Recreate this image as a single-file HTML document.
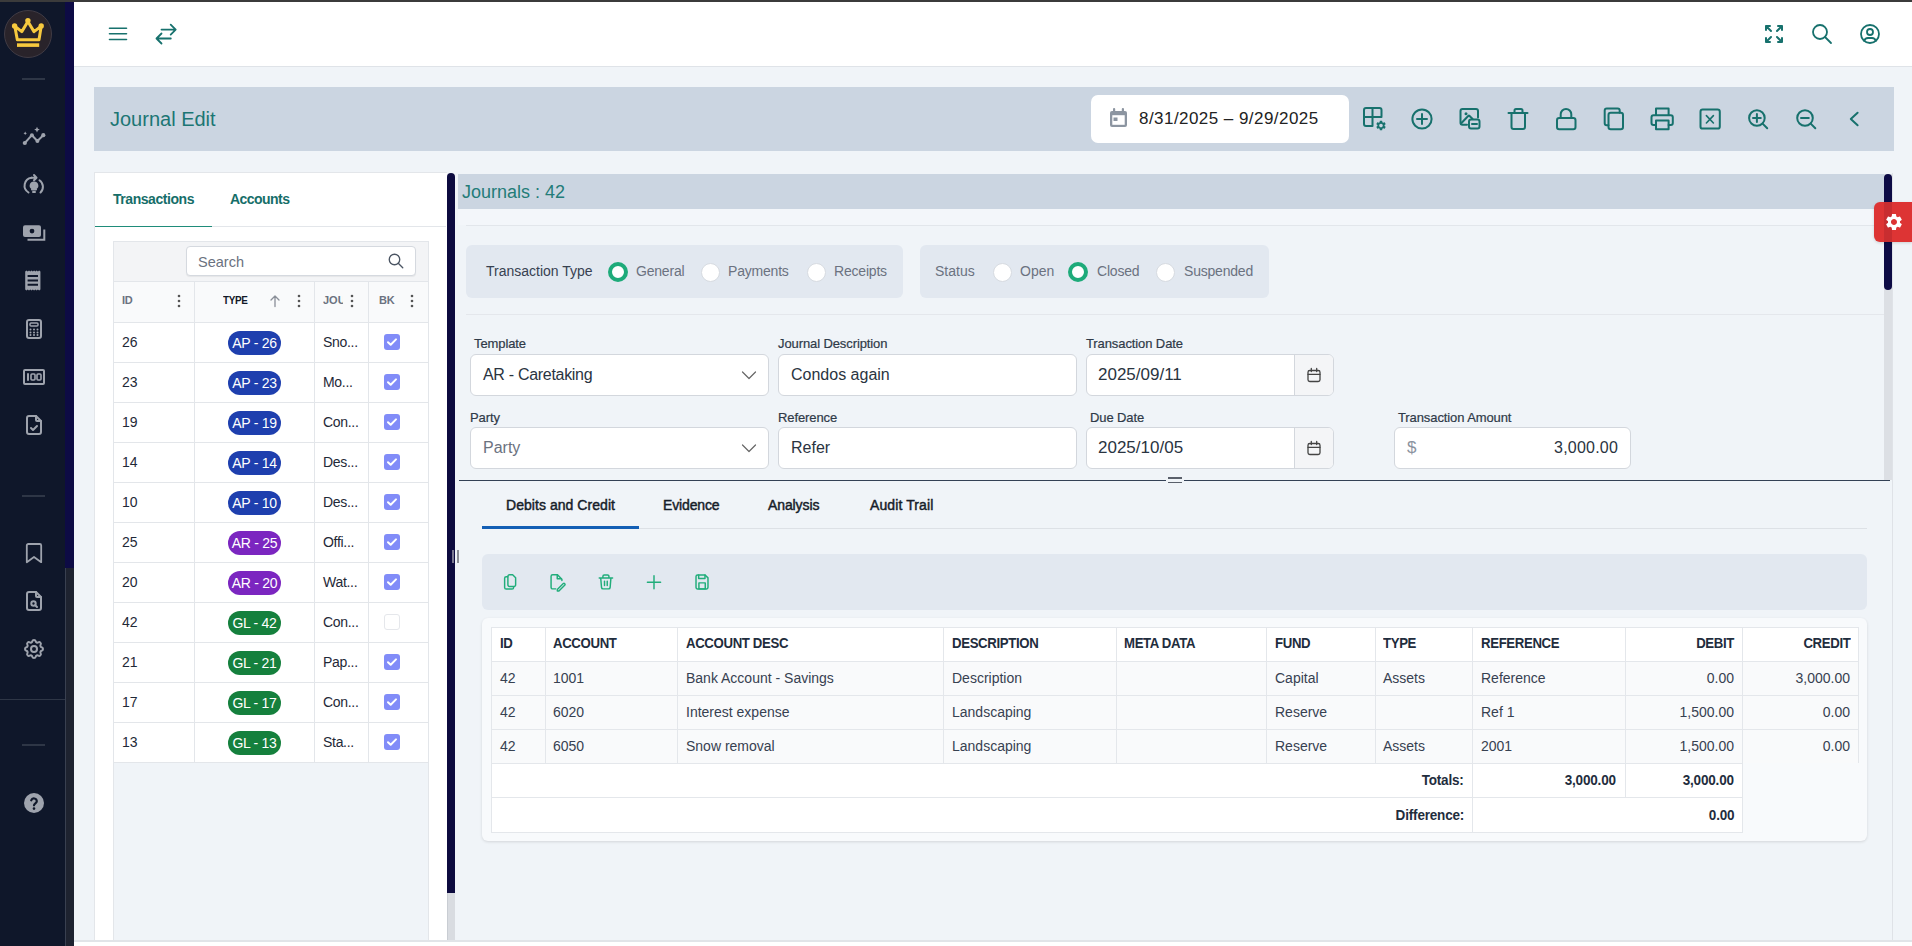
<!DOCTYPE html>
<html><head><meta charset="utf-8">
<style>
*{box-sizing:border-box;margin:0;padding:0}
html,body{width:1912px;height:946px;overflow:hidden}
body{font-family:"Liberation Sans",sans-serif;background:#f0f4f8;position:relative;color:#1f2937}
.a{position:absolute}
svg{display:block;overflow:visible}
.md{-webkit-text-stroke:0.45px currentColor}
</style></head><body>
<div class="a" style="left:0px;top:0px;width:1912px;height:2px;background:#3b3b3b"></div><div class="a" style="left:0px;top:2px;width:65px;height:944px;background:#0f172a"></div><div class="a" style="left:65px;top:2px;width:9px;height:944px;background:#1e2330;border-left:1px solid #394050"></div><div class="a" style="left:65px;top:2px;width:9px;height:566px;background:#0d0b45"></div><div class="a" style="left:4px;top:10px;width:48px;height:48px;border-radius:50%;background:#29232a;border:1px solid #403b44"></div><svg class="a" style="left:11px;top:18px" width="34" height="32" viewBox="0 0 34 32"><g fill="none" stroke="#f7c93e" stroke-width="3" stroke-linejoin="round"><path d="M3.8 8.2 L10.8 13.6 L16.9 3.5 L23 13.6 L30.2 8.2 L28 21.8 H6.3 Z"/></g><g fill="#f7c93e"><circle cx="16.9" cy="2.6" r="2.7"/><circle cx="3.6" cy="8" r="2.7"/><circle cx="30.2" cy="8" r="2.7"/><rect x="6" y="25.3" width="22.2" height="3.6"/></g></svg><div class="a" style="left:22px;top:78px;width:23px;height:2px;background:#2e3646"></div><svg class="a" style="left:22px;top:125px" width="24" height="24" viewBox="0 0 24 24" fill="none" stroke="#9ea3ad" stroke-width="2" stroke-linecap="round" stroke-linejoin="round" ><path d="M2.8 18L9.9 10.2L15.4 16L21.3 10.2" stroke-width="2"/><circle cx="2.8" cy="18" r="2.1" fill="#9ea3ad" stroke="none"/><circle cx="9.9" cy="10.2" r="2" fill="#9ea3ad" stroke="none"/><circle cx="15.4" cy="16" r="2" fill="#9ea3ad" stroke="none"/><circle cx="21.3" cy="10.2" r="2.1" fill="#9ea3ad" stroke="none"/><path d="M15 1.8l.9 1.9 1.9.9-1.9.9-.9 1.9-.9-1.9-1.9-.9 1.9-.9z" fill="#9ea3ad" stroke="none"/><path d="M3.2 6.6l.6 1.1 1.1.6-1.1.6-.6 1.1-.6-1.1-1.1-.6 1.1-.6z" fill="#9ea3ad" stroke="none"/></svg><svg class="a" style="left:22px;top:173px" width="24" height="24" viewBox="0 0 24 24" fill="none" stroke="#9ea3ad" stroke-width="2" stroke-linecap="round" stroke-linejoin="round" ><path d="M6.5 19.5a8 8 0 0 1 3-14.8"/><path d="M9.5 4.7h4.5M12 2l2.5 2.7L12 7.3"/><path d="M17.5 7.2a8 8 0 0 1 1 12.3"/><path d="M12 9.5a3.2 3.2 0 0 1 2 5.8v1.2h-4v-1.2a3.2 3.2 0 0 1 2-5.8z" fill="#9ea3ad"/><path d="M11 19h2"/></svg><svg class="a" style="left:22px;top:220px" width="24" height="24" viewBox="0 0 24 24" fill="none" stroke="#9ea3ad" stroke-width="2" stroke-linecap="round" stroke-linejoin="round" ><rect x="1" y="5.2" width="18" height="11.8" rx="2" fill="#9ea3ad" stroke="none"/><circle cx="10" cy="11.1" r="2.4" fill="#0f172a" stroke="none"/><path d="M22.3 9.5V19.8H5.5" stroke-linecap="butt" stroke-linejoin="miter"/></svg><svg class="a" style="left:22px;top:269px" width="24" height="24" viewBox="0 0 24 24" fill="none" stroke="#9ea3ad" stroke-width="2" stroke-linecap="round" stroke-linejoin="round" ><path d="M3.2 2.5l1.27-1 1.27 1 1.27-1 1.27 1 1.27-1 1.27 1 1.27-1 1.27 1 1.27-1 1.27 1 1.27-1 1.26 1V20.4l-1.26 1-1.27-1-1.27 1-1.27-1-1.27 1-1.27-1-1.27 1-1.27-1-1.27 1-1.27-1-1.27 1-1.27-1z" fill="#9ea3ad" stroke="none"/><path d="M5.6 7h10.4M5.6 11.4h10.4M5.6 15.8h10.4" stroke="#0f172a" stroke-width="2" stroke-linecap="butt"/></svg><svg class="a" style="left:22px;top:317px" width="24" height="24" viewBox="0 0 24 24" fill="none" stroke="#9ea3ad" stroke-width="2" stroke-linecap="round" stroke-linejoin="round" ><rect x="5" y="3" width="14" height="18" rx="2"/><rect x="8" y="6" width="8" height="3" rx="1" stroke-width="1.5"/><path d="M8.5 12.5h.01M12 12.5h.01M15.5 12.5h.01M8.5 15.5h.01M12 15.5h.01M15.5 15.5h.01M8.5 18h.01M12 18h.01M15.5 18h.01"/></svg><svg class="a" style="left:22px;top:365px" width="24" height="24" viewBox="0 0 24 24" fill="none" stroke="#9ea3ad" stroke-width="2" stroke-linecap="round" stroke-linejoin="round" ><rect x="2" y="5" width="20" height="14" rx="1"/><path d="M6 9v6"/><rect x="9" y="9" width="4" height="6" rx="1" stroke-width="1.6"/><rect x="15" y="9" width="4" height="6" rx="1" stroke-width="1.6"/></svg><svg class="a" style="left:22px;top:413px" width="24" height="24" viewBox="0 0 24 24" fill="none" stroke="#9ea3ad" stroke-width="2" stroke-linecap="round" stroke-linejoin="round" ><path d="M14 3v4a1 1 0 0 0 1 1h4"/><path d="M17 21H7a2 2 0 0 1-2-2V5a2 2 0 0 1 2-2h7l5 5v11a2 2 0 0 1-2 2z"/><path d="M9 15l2 2 4-4"/></svg><div class="a" style="left:22px;top:495px;width:23px;height:2px;background:#2e3646"></div><svg class="a" style="left:22px;top:541px" width="24" height="24" viewBox="0 0 24 24" fill="none" stroke="#9ea3ad" stroke-width="2" stroke-linecap="round" stroke-linejoin="round" ><path d="M4.8 4.5a1.5 1.5 0 0 1 1.5-1.5h11.4a1.5 1.5 0 0 1 1.5 1.5V21.2l-7.2-5.2-7.2 5.2z" stroke-width="1.8"/></svg><svg class="a" style="left:22px;top:589px" width="24" height="24" viewBox="0 0 24 24" fill="none" stroke="#9ea3ad" stroke-width="2" stroke-linecap="round" stroke-linejoin="round" ><path d="M14 3v4a1 1 0 0 0 1 1h4"/><path d="M12 21H7a2 2 0 0 1-2-2V5a2 2 0 0 1 2-2h7l5 5v11a2 2 0 0 1-2 2h-5z"/><circle cx="11.5" cy="14.5" r="2.2"/><path d="M13.2 16.2L15 18"/></svg><svg class="a" style="left:22px;top:637px" width="24" height="24" viewBox="0 0 24 24" fill="none" stroke="#9ea3ad" stroke-width="2" stroke-linecap="round" stroke-linejoin="round" ><path d="M10.325 4.317c.426-1.756 2.924-1.756 3.35 0a1.724 1.724 0 0 0 2.573 1.066c1.543-.94 3.31.826 2.37 2.370a1.724 1.724 0 0 0 1.065 2.572c1.756.426 1.756 2.924 0 3.35a1.724 1.724 0 0 0-1.066 2.573c.94 1.543-.826 3.31-2.37 2.37a1.724 1.724 0 0 0-2.572 1.065c-.426 1.756-2.924 1.756-3.35 0a1.724 1.724 0 0 0-2.573-1.066c-1.543.94-3.31-.826-2.37-2.37a1.724 1.724 0 0 0-1.065-2.572c-1.756-.426-1.756-2.924 0-3.35a1.724 1.724 0 0 0 1.066-2.573c-.94-1.543.826-3.31 2.37-2.37 1 .608 2.296.07 2.572-1.065z"/><circle cx="12" cy="12" r="3"/></svg><div class="a" style="left:0px;top:699px;width:65px;height:1px;background:#2e3646"></div><div class="a" style="left:22px;top:744px;width:23px;height:2px;background:#2e3646"></div><svg class="a" style="left:22px;top:791px" width="24" height="24" viewBox="0 0 24 24"><circle cx="12" cy="12" r="10" fill="#9ea3ad"/><path d="M9.2 9.3a2.9 2.9 0 0 1 5.6 1c0 1.9-2.8 2.2-2.8 4" fill="none" stroke="#0f172a" stroke-width="2.2" stroke-linecap="round"/><circle cx="12" cy="17.6" r="1.3" fill="#0f172a"/></svg><div class="a" style="left:74px;top:2px;width:1838px;height:65px;background:#fff;border-bottom:1px solid #dfe3e8"></div><svg class="a" style="left:106px;top:22px" width="24" height="24" viewBox="0 0 24 24" fill="none" stroke="#17716d" stroke-width="1.6" stroke-linecap="round" stroke-linejoin="round"><path d="M3.5 6.2h17M3.5 11.8h17M3.5 17.5h17"/></svg><svg class="a" style="left:150px;top:20px" width="32" height="28" viewBox="150 20 32 28" fill="none" stroke="#17716d" stroke-width="1.8" stroke-linecap="round" stroke-linejoin="round"><path d="M161.5 29.6H175.7M170.7 24.6l5 5-5 5M170.8 38.5H156.5M161.5 33.5l-5 5 5 5"/></svg><svg class="a" style="left:1762px;top:22px" width="24" height="24" viewBox="0 0 24 24" fill="none" stroke="#17716d" stroke-width="2" stroke-linecap="round" stroke-linejoin="round"><path d="M16 4h4v4M15 9l5-5M8 20H4v-4M4 20l5-5M16 20h4v-4M15 15l5 5M8 4H4v4M4 4l5 5"/></svg><svg class="a" style="left:1810px;top:22px" width="24" height="24" viewBox="0 0 24 24" fill="none" stroke="#17716d" stroke-width="1.8" stroke-linecap="round" stroke-linejoin="round"><circle cx="10" cy="10" r="7"/><path d="M21 21l-6-6"/></svg><svg class="a" style="left:1858px;top:22px" width="24" height="24" viewBox="0 0 24 24" fill="none" stroke="#17716d" stroke-width="1.8" stroke-linecap="round" stroke-linejoin="round"><circle cx="12" cy="12" r="9"/><circle cx="12" cy="10" r="3"/><path d="M6.2 18.9a4 4 0 0 1 3.8-2.9h4a4 4 0 0 1 3.8 2.9"/></svg><div class="a" style="left:94px;top:87px;width:1800px;height:64px;background:#cbd5e1"></div><div class="a " style="left:110px;top:107px;font-size:20px;line-height:24px;color:#1c7674;font-weight:normal;letter-spacing:0px;white-space:nowrap;">Journal Edit</div><div class="a" style="left:1091px;top:95px;width:258px;height:48px;background:#fff;border-radius:7px"></div><svg class="a" style="left:1108px;top:107px" width="22" height="22" viewBox="0 0 22 22"><rect x="2" y="4" width="17" height="16" rx="2" fill="#8c95a1"/><rect x="4.3" y="8.2" width="12.4" height="9.6" fill="#fff"/><rect x="5.5" y="10.5" width="4" height="3.5" fill="#8c95a1"/><rect x="5" y="1" width="2.2" height="4" rx="1" fill="#8c95a1"/><rect x="13.8" y="1" width="2.2" height="4" rx="1" fill="#8c95a1"/></svg><div class="a " style="left:1139px;top:109px;font-size:17px;line-height:20px;color:#222;font-weight:normal;letter-spacing:0.45px;white-space:nowrap;">8/31/2025 – 9/29/2025</div><svg class="a" style="left:1350px;top:100px" width="530" height="40" viewBox="1350 100 530 40" fill="none" stroke="#17716d" stroke-width="2" stroke-linecap="round" stroke-linejoin="round"><path d="M1372.5 126H1366a2 2 0 0 1-2-2V110a2 2 0 0 1 2-2h13.5a2 2 0 0 1 2 2v6.5M1364 117H1381.5M1372.5 108V126"/><circle cx="1381" cy="125.5" r="6.5" fill="#cbd5e1" stroke="none"/><path transform="translate(1375,119.5) scale(0.5)" fill="#17716d" stroke="none" d="M19.14 12.94c.04-.3.06-.61.06-.94 0-.32-.02-.64-.07-.94l2.03-1.58a.49.49 0 0 0 .12-.61l-1.92-3.32a.488.488 0 0 0-.59-.22l-2.39.96c-.5-.38-1.03-.7-1.62-.94l-.36-2.54a.484.484 0 0 0-.48-.41h-3.84c-.24 0-.43.17-.47.41l-.36 2.54c-.59.24-1.130.57-1.62.94l-2.39-.96c-.22-.08-.47 0-.59.22L2.74 8.87c-.12.21-.08.47.12.61l2.03 1.58c-.05.3-.09.63-.09.94s.02.64.07.94l-2.03 1.58a.49.49 0 0 0-.12.61l1.92 3.32c.12.22.37.29.59.22l2.39-.96c.5.38 1.03.7 1.62.94l.36 2.54c.05.24.24.41.48.41h3.84c.24 0 .44-.17.47-.41l.36-2.54c.59-.24 1.13-.56 1.62-.94l2.39.96c.22.08.47 0 .59-.22l1.92-3.32c.12-.22.07-.47-.12-.61l-2.01-1.58zM12 15.6c-1.98 0-3.6-1.62-3.6-3.6s1.62-3.6 3.6-3.6 3.6 1.62 3.6 3.6-1.62 3.6-3.6 3.6z"/><circle cx="1422" cy="119" r="9.6"/><path d="M1417 119h10M1422 114v10"/><path d="M1467 124.7h-4.5a2 2 0 0 1-2-2V111a2 2 0 0 1 2-2h13.5a2 2 0 0 1 2 2v6.5"/><circle cx="1466" cy="113.8" r="1.5" fill="#17716d" stroke="none"/><path d="M1461 123.5l7.2-7.5a1 1 0 0 1 1.4 0l3 3"/><rect x="1469" y="119.5" width="10.5" height="9" rx="2"/><path d="M1472 124h5"/><path d="M1508.5 113H1527.5M1511.5 113v14a2 2 0 0 0 2 2H1523a2 2 0 0 0 2-2v-14M1514.5 113v-2.5a1.5 1.5 0 0 1 1.5-1.5h5a1.5 1.5 0 0 1 1.5 1.5V113"/><rect x="1557" y="118" width="18.5" height="11.2" rx="2.2"/><path d="M1560.7 118v-3.8a5.3 5.3 0 0 1 10.6 0V118"/><path d="M1608.5 125.2h-1.8a2 2 0 0 1-2-2V110.5a2 2 0 0 1 2-2h11a2 2 0 0 1 2 2v2.2"/><rect x="1608.5" y="112.8" width="14.5" height="16.5" rx="2.2"/><path d="M1656 115.3V108.6H1668.6V115.3M1656 125h-2.5a2 2 0 0 1-2-2v-5.7a2 2 0 0 1 2-2h17.3a2 2 0 0 1 2 2v5.7a2 2 0 0 1-2 2h-2.2"/><rect x="1656" y="120.6" width="12.6" height="8.6"/><rect x="1700.5" y="109.6" width="19.3" height="19" rx="2.2"/><path d="M1706.4 115.6l7 7.4M1713.4 115.6l-7 7.4" stroke-width="1.6"/><circle cx="1756.9" cy="118" r="7.8"/><path d="M1762.6 123.6l4.6 4.6M1753 118h7.8M1756.9 114.1v7.8"/><circle cx="1805" cy="118" r="7.8"/><path d="M1810.7 123.6l4.6 4.6M1801 118h7.8"/><path d="M1857.6 112.7l-6.8 6.2 6.8 6.3"/></svg><div class="a" style="left:94px;top:172px;width:353px;height:769px;background:#fff;border:1px solid #e3e6ea;border-right:none;border-bottom:none"></div><div class="a " style="left:113px;top:191px;font-size:14px;line-height:16px;color:#166e69;font-weight:bold;letter-spacing:-0.45px;white-space:nowrap;">Transactions</div><div class="a " style="left:230px;top:191px;font-size:14px;line-height:16px;color:#166e69;font-weight:bold;letter-spacing:-0.55px;white-space:nowrap;">Accounts</div><div class="a" style="left:95px;top:226px;width:351px;height:1px;background:#e3e6ea"></div><div class="a" style="left:95px;top:225.5px;width:117px;height:1.6px;background:#1f8c7a"></div><div class="a" style="left:113px;top:241px;width:316px;height:700px;background:#f0f4f8;border-left:1px solid #e3e6ea;border-right:1px solid #e3e6ea"></div><div class="a" style="left:113px;top:241px;width:316px;height:40px;background:#f3f4f6;border:1px solid #e3e6ea;border-bottom:none"></div><div class="a" style="left:186px;top:246px;width:230px;height:30px;background:#fff;border:1px solid #d5d9df;border-radius:4px;box-shadow:0 1px 1px rgba(0,0,0,.06)"></div><div class="a " style="left:198px;top:254px;font-size:14.5px;line-height:17px;color:#6b7280;font-weight:normal;letter-spacing:0px;white-space:nowrap;">Search</div><svg class="a" style="left:387px;top:252px" width="18" height="18" viewBox="0 0 24 24" fill="none" stroke="#4b5563" stroke-width="1.8" stroke-linecap="round" stroke-linejoin="round"><circle cx="10" cy="10" r="7"/><path d="M21 21l-6-6"/></svg><div class="a" style="left:113px;top:281px;width:316px;height:42px;background:#f9fafb;border-top:1px solid #e3e6ea;border-bottom:1px solid #e3e6ea"></div><div class="a" style="left:194px;top:281px;width:1px;height:482px;background:#e3e6ea"></div><div class="a" style="left:314px;top:281px;width:1px;height:482px;background:#e3e6ea"></div><div class="a" style="left:368px;top:281px;width:1px;height:482px;background:#e3e6ea"></div><div class="a" style="left:113px;top:281px;width:1px;height:482px;background:#e3e6ea"></div><div class="a" style="left:428px;top:281px;width:1px;height:482px;background:#e3e6ea"></div><div class="a " style="left:122px;top:294px;font-size:11px;line-height:13px;color:#6b7280;font-weight:bold;letter-spacing:-0.2px;white-space:nowrap;">ID</div><div class="a " style="left:223px;top:294px;font-size:11px;line-height:13px;color:#111827;font-weight:bold;letter-spacing:-0.4px;white-space:nowrap;transform:scaleX(0.9);transform-origin:0 0">TYPE</div><div class="a" style="left:323px;top:294px;width:20px;overflow:hidden;font-size:11px;line-height:13px;color:#6b7280;font-weight:bold;white-space:nowrap">JOURNAL</div><div class="a " style="left:379px;top:294px;font-size:11px;line-height:13px;color:#6b7280;font-weight:bold;letter-spacing:-0.2px;white-space:nowrap;">BK</div><svg class="a" style="left:177px;top:294px" width="4" height="14" viewBox="0 0 4 14"><circle cx="2" cy="2" r="1.3" fill="#555"/><circle cx="2" cy="7" r="1.3" fill="#555"/><circle cx="2" cy="12" r="1.3" fill="#555"/></svg><svg class="a" style="left:297px;top:294px" width="4" height="14" viewBox="0 0 4 14"><circle cx="2" cy="2" r="1.3" fill="#555"/><circle cx="2" cy="7" r="1.3" fill="#555"/><circle cx="2" cy="12" r="1.3" fill="#555"/></svg><svg class="a" style="left:350px;top:294px" width="4" height="14" viewBox="0 0 4 14"><circle cx="2" cy="2" r="1.3" fill="#555"/><circle cx="2" cy="7" r="1.3" fill="#555"/><circle cx="2" cy="12" r="1.3" fill="#555"/></svg><svg class="a" style="left:410px;top:294px" width="4" height="14" viewBox="0 0 4 14"><circle cx="2" cy="2" r="1.3" fill="#555"/><circle cx="2" cy="7" r="1.3" fill="#555"/><circle cx="2" cy="12" r="1.3" fill="#555"/></svg><svg class="a" style="left:268px;top:294px" width="14" height="14" viewBox="0 0 14 14" fill="none" stroke="#8a8f98" stroke-width="1.3" stroke-linecap="round" stroke-linejoin="round"><path d="M7 12.5V2M3 6l4-4 4 4"/></svg><div class="a" style="left:114px;top:323px;width:314px;height:39px;background:#fff"></div><div class="a" style="left:113px;top:362px;width:316px;height:1px;background:#e3e6ea"></div><div class="a " style="left:122px;top:334px;font-size:14px;line-height:17px;color:#1f2937;font-weight:normal;letter-spacing:0px;white-space:nowrap;">26</div><div class="a" style="left:228px;top:331px;width:53px;height:24px;border-radius:12px;background:#1e3fae;color:#fff;font-size:14px;line-height:24px;text-align:center;letter-spacing:-0.3px;white-space:nowrap">AP - 26</div><div class="a " style="left:323px;top:334px;font-size:14px;line-height:17px;color:#1f2937;font-weight:normal;letter-spacing:-0.3px;white-space:nowrap;">Sno...</div><svg class="a" style="left:384px;top:334px" width="16" height="16" viewBox="0 0 16 16"><rect width="16" height="16" rx="3" fill="#818cf8"/><path d="M4 8.2l2.7 2.6L12 5.4" fill="none" stroke="#fff" stroke-width="2" stroke-linecap="round" stroke-linejoin="round"/></svg><div class="a" style="left:114px;top:363px;width:314px;height:39px;background:#fff"></div><div class="a" style="left:113px;top:402px;width:316px;height:1px;background:#e3e6ea"></div><div class="a " style="left:122px;top:374px;font-size:14px;line-height:17px;color:#1f2937;font-weight:normal;letter-spacing:0px;white-space:nowrap;">23</div><div class="a" style="left:228px;top:371px;width:53px;height:24px;border-radius:12px;background:#1e3fae;color:#fff;font-size:14px;line-height:24px;text-align:center;letter-spacing:-0.3px;white-space:nowrap">AP - 23</div><div class="a " style="left:323px;top:374px;font-size:14px;line-height:17px;color:#1f2937;font-weight:normal;letter-spacing:-0.3px;white-space:nowrap;">Mo...</div><svg class="a" style="left:384px;top:374px" width="16" height="16" viewBox="0 0 16 16"><rect width="16" height="16" rx="3" fill="#818cf8"/><path d="M4 8.2l2.7 2.6L12 5.4" fill="none" stroke="#fff" stroke-width="2" stroke-linecap="round" stroke-linejoin="round"/></svg><div class="a" style="left:114px;top:403px;width:314px;height:39px;background:#fff"></div><div class="a" style="left:113px;top:442px;width:316px;height:1px;background:#e3e6ea"></div><div class="a " style="left:122px;top:414px;font-size:14px;line-height:17px;color:#1f2937;font-weight:normal;letter-spacing:0px;white-space:nowrap;">19</div><div class="a" style="left:228px;top:411px;width:53px;height:24px;border-radius:12px;background:#1e3fae;color:#fff;font-size:14px;line-height:24px;text-align:center;letter-spacing:-0.3px;white-space:nowrap">AP - 19</div><div class="a " style="left:323px;top:414px;font-size:14px;line-height:17px;color:#1f2937;font-weight:normal;letter-spacing:-0.3px;white-space:nowrap;">Con...</div><svg class="a" style="left:384px;top:414px" width="16" height="16" viewBox="0 0 16 16"><rect width="16" height="16" rx="3" fill="#818cf8"/><path d="M4 8.2l2.7 2.6L12 5.4" fill="none" stroke="#fff" stroke-width="2" stroke-linecap="round" stroke-linejoin="round"/></svg><div class="a" style="left:114px;top:443px;width:314px;height:39px;background:#fff"></div><div class="a" style="left:113px;top:482px;width:316px;height:1px;background:#e3e6ea"></div><div class="a " style="left:122px;top:454px;font-size:14px;line-height:17px;color:#1f2937;font-weight:normal;letter-spacing:0px;white-space:nowrap;">14</div><div class="a" style="left:228px;top:451px;width:53px;height:24px;border-radius:12px;background:#1e3fae;color:#fff;font-size:14px;line-height:24px;text-align:center;letter-spacing:-0.3px;white-space:nowrap">AP - 14</div><div class="a " style="left:323px;top:454px;font-size:14px;line-height:17px;color:#1f2937;font-weight:normal;letter-spacing:-0.3px;white-space:nowrap;">Des...</div><svg class="a" style="left:384px;top:454px" width="16" height="16" viewBox="0 0 16 16"><rect width="16" height="16" rx="3" fill="#818cf8"/><path d="M4 8.2l2.7 2.6L12 5.4" fill="none" stroke="#fff" stroke-width="2" stroke-linecap="round" stroke-linejoin="round"/></svg><div class="a" style="left:114px;top:483px;width:314px;height:39px;background:#fff"></div><div class="a" style="left:113px;top:522px;width:316px;height:1px;background:#e3e6ea"></div><div class="a " style="left:122px;top:494px;font-size:14px;line-height:17px;color:#1f2937;font-weight:normal;letter-spacing:0px;white-space:nowrap;">10</div><div class="a" style="left:228px;top:491px;width:53px;height:24px;border-radius:12px;background:#1e3fae;color:#fff;font-size:14px;line-height:24px;text-align:center;letter-spacing:-0.3px;white-space:nowrap">AP - 10</div><div class="a " style="left:323px;top:494px;font-size:14px;line-height:17px;color:#1f2937;font-weight:normal;letter-spacing:-0.3px;white-space:nowrap;">Des...</div><svg class="a" style="left:384px;top:494px" width="16" height="16" viewBox="0 0 16 16"><rect width="16" height="16" rx="3" fill="#818cf8"/><path d="M4 8.2l2.7 2.6L12 5.4" fill="none" stroke="#fff" stroke-width="2" stroke-linecap="round" stroke-linejoin="round"/></svg><div class="a" style="left:114px;top:523px;width:314px;height:39px;background:#fff"></div><div class="a" style="left:113px;top:562px;width:316px;height:1px;background:#e3e6ea"></div><div class="a " style="left:122px;top:534px;font-size:14px;line-height:17px;color:#1f2937;font-weight:normal;letter-spacing:0px;white-space:nowrap;">25</div><div class="a" style="left:228px;top:531px;width:53px;height:24px;border-radius:12px;background:#7b26c0;color:#fff;font-size:14px;line-height:24px;text-align:center;letter-spacing:-0.3px;white-space:nowrap">AR - 25</div><div class="a " style="left:323px;top:534px;font-size:14px;line-height:17px;color:#1f2937;font-weight:normal;letter-spacing:-0.3px;white-space:nowrap;">Offi...</div><svg class="a" style="left:384px;top:534px" width="16" height="16" viewBox="0 0 16 16"><rect width="16" height="16" rx="3" fill="#818cf8"/><path d="M4 8.2l2.7 2.6L12 5.4" fill="none" stroke="#fff" stroke-width="2" stroke-linecap="round" stroke-linejoin="round"/></svg><div class="a" style="left:114px;top:563px;width:314px;height:39px;background:#fff"></div><div class="a" style="left:113px;top:602px;width:316px;height:1px;background:#e3e6ea"></div><div class="a " style="left:122px;top:574px;font-size:14px;line-height:17px;color:#1f2937;font-weight:normal;letter-spacing:0px;white-space:nowrap;">20</div><div class="a" style="left:228px;top:571px;width:53px;height:24px;border-radius:12px;background:#7b26c0;color:#fff;font-size:14px;line-height:24px;text-align:center;letter-spacing:-0.3px;white-space:nowrap">AR - 20</div><div class="a " style="left:323px;top:574px;font-size:14px;line-height:17px;color:#1f2937;font-weight:normal;letter-spacing:-0.3px;white-space:nowrap;">Wat...</div><svg class="a" style="left:384px;top:574px" width="16" height="16" viewBox="0 0 16 16"><rect width="16" height="16" rx="3" fill="#818cf8"/><path d="M4 8.2l2.7 2.6L12 5.4" fill="none" stroke="#fff" stroke-width="2" stroke-linecap="round" stroke-linejoin="round"/></svg><div class="a" style="left:114px;top:603px;width:314px;height:39px;background:#fff"></div><div class="a" style="left:113px;top:642px;width:316px;height:1px;background:#e3e6ea"></div><div class="a " style="left:122px;top:614px;font-size:14px;line-height:17px;color:#1f2937;font-weight:normal;letter-spacing:0px;white-space:nowrap;">42</div><div class="a" style="left:228px;top:611px;width:53px;height:24px;border-radius:12px;background:#15803d;color:#fff;font-size:14px;line-height:24px;text-align:center;letter-spacing:-0.3px;white-space:nowrap">GL - 42</div><div class="a " style="left:323px;top:614px;font-size:14px;line-height:17px;color:#1f2937;font-weight:normal;letter-spacing:-0.3px;white-space:nowrap;">Con...</div><div class="a" style="left:384px;top:614px;width:16px;height:16px;background:#fff;border:1px solid #e5e7eb;border-radius:3px"></div><div class="a" style="left:114px;top:643px;width:314px;height:39px;background:#fff"></div><div class="a" style="left:113px;top:682px;width:316px;height:1px;background:#e3e6ea"></div><div class="a " style="left:122px;top:654px;font-size:14px;line-height:17px;color:#1f2937;font-weight:normal;letter-spacing:0px;white-space:nowrap;">21</div><div class="a" style="left:228px;top:651px;width:53px;height:24px;border-radius:12px;background:#15803d;color:#fff;font-size:14px;line-height:24px;text-align:center;letter-spacing:-0.3px;white-space:nowrap">GL - 21</div><div class="a " style="left:323px;top:654px;font-size:14px;line-height:17px;color:#1f2937;font-weight:normal;letter-spacing:-0.3px;white-space:nowrap;">Pap...</div><svg class="a" style="left:384px;top:654px" width="16" height="16" viewBox="0 0 16 16"><rect width="16" height="16" rx="3" fill="#818cf8"/><path d="M4 8.2l2.7 2.6L12 5.4" fill="none" stroke="#fff" stroke-width="2" stroke-linecap="round" stroke-linejoin="round"/></svg><div class="a" style="left:114px;top:683px;width:314px;height:39px;background:#fff"></div><div class="a" style="left:113px;top:722px;width:316px;height:1px;background:#e3e6ea"></div><div class="a " style="left:122px;top:694px;font-size:14px;line-height:17px;color:#1f2937;font-weight:normal;letter-spacing:0px;white-space:nowrap;">17</div><div class="a" style="left:228px;top:691px;width:53px;height:24px;border-radius:12px;background:#15803d;color:#fff;font-size:14px;line-height:24px;text-align:center;letter-spacing:-0.3px;white-space:nowrap">GL - 17</div><div class="a " style="left:323px;top:694px;font-size:14px;line-height:17px;color:#1f2937;font-weight:normal;letter-spacing:-0.3px;white-space:nowrap;">Con...</div><svg class="a" style="left:384px;top:694px" width="16" height="16" viewBox="0 0 16 16"><rect width="16" height="16" rx="3" fill="#818cf8"/><path d="M4 8.2l2.7 2.6L12 5.4" fill="none" stroke="#fff" stroke-width="2" stroke-linecap="round" stroke-linejoin="round"/></svg><div class="a" style="left:114px;top:723px;width:314px;height:39px;background:#fff"></div><div class="a" style="left:113px;top:762px;width:316px;height:1px;background:#e3e6ea"></div><div class="a " style="left:122px;top:734px;font-size:14px;line-height:17px;color:#1f2937;font-weight:normal;letter-spacing:0px;white-space:nowrap;">13</div><div class="a" style="left:228px;top:731px;width:53px;height:24px;border-radius:12px;background:#15803d;color:#fff;font-size:14px;line-height:24px;text-align:center;letter-spacing:-0.3px;white-space:nowrap">GL - 13</div><div class="a " style="left:323px;top:734px;font-size:14px;line-height:17px;color:#1f2937;font-weight:normal;letter-spacing:-0.3px;white-space:nowrap;">Sta...</div><svg class="a" style="left:384px;top:734px" width="16" height="16" viewBox="0 0 16 16"><rect width="16" height="16" rx="3" fill="#818cf8"/><path d="M4 8.2l2.7 2.6L12 5.4" fill="none" stroke="#fff" stroke-width="2" stroke-linecap="round" stroke-linejoin="round"/></svg><div class="a" style="left:194px;top:281px;width:1px;height:482px;background:#e3e6ea"></div><div class="a" style="left:314px;top:281px;width:1px;height:482px;background:#e3e6ea"></div><div class="a" style="left:368px;top:281px;width:1px;height:482px;background:#e3e6ea"></div><div class="a" style="left:113px;top:281px;width:1px;height:482px;background:#e3e6ea"></div><div class="a" style="left:428px;top:281px;width:1px;height:482px;background:#e3e6ea"></div><div class="a" style="left:74px;top:940px;width:1838px;height:2px;background:#e1e4e8"></div><div class="a" style="left:74px;top:942px;width:1838px;height:4px;background:#fff"></div><div class="a" style="left:447px;top:173px;width:8px;height:720px;background:#0d0b3f;border-radius:4px 4px 0 0"></div><div class="a" style="left:447px;top:893px;width:8px;height:47px;background:#d9dce1;border-left:1px solid #c9cdd3"></div><div class="a" style="left:455px;top:173px;width:1438px;height:767px;background:#f0f4f8"></div><div class="a" style="left:1892px;top:173px;width:1px;height:767px;background:#dfe2e7"></div><div class="a" style="left:458px;top:174px;width:1426px;height:35px;background:#cbd5e1"></div><div class="a" style="left:458px;top:209px;width:1426px;height:16px;background:#f3f6fa"></div><div class="a" style="left:466px;top:225px;width:1418px;height:1px;background:#e2e6eb"></div><div class="a " style="left:462px;top:181px;font-size:18px;line-height:22px;color:#237c78;font-weight:normal;letter-spacing:0px;white-space:nowrap;">Journals : 42</div><div class="a" style="left:1884px;top:174px;width:8px;height:306px;background:#dcdfe4"></div><div class="a" style="left:1884px;top:174px;width:8px;height:116px;background:#0d0b45;border-radius:4px"></div><div class="a" style="left:466px;top:245px;width:437px;height:53px;background:#e2e8f0;border-radius:6px"></div><div class="a" style="left:920px;top:245px;width:349px;height:53px;background:#e2e8f0;border-radius:6px"></div><div class="a " style="left:486px;top:263px;font-size:14px;line-height:17px;color:#374151;font-weight:normal;letter-spacing:0px;white-space:nowrap;">Transaction Type</div><div class="a" style="left:608px;top:262px;width:20px;height:20px;border-radius:50%;background:#fff;border:4px solid #1eab7a"></div><div class="a " style="left:636px;top:263px;font-size:14px;line-height:17px;color:#6b7280;font-weight:normal;letter-spacing:-0.2px;white-space:nowrap;">General</div><div class="a" style="left:700.5px;top:262.5px;width:19px;height:19px;border-radius:50%;background:#fff;border:1px solid #d7dbe1"></div><div class="a " style="left:728px;top:263px;font-size:14px;line-height:17px;color:#6b7280;font-weight:normal;letter-spacing:-0.2px;white-space:nowrap;">Payments</div><div class="a" style="left:806.5px;top:262.5px;width:19px;height:19px;border-radius:50%;background:#fff;border:1px solid #d7dbe1"></div><div class="a " style="left:834px;top:263px;font-size:14px;line-height:17px;color:#6b7280;font-weight:normal;letter-spacing:-0.2px;white-space:nowrap;">Receipts</div><div class="a " style="left:935px;top:263px;font-size:14px;line-height:17px;color:#6b7280;font-weight:normal;letter-spacing:0px;white-space:nowrap;">Status</div><div class="a" style="left:992.5px;top:262.5px;width:19px;height:19px;border-radius:50%;background:#fff;border:1px solid #d7dbe1"></div><div class="a " style="left:1020px;top:263px;font-size:14px;line-height:17px;color:#6b7280;font-weight:normal;letter-spacing:0px;white-space:nowrap;">Open</div><div class="a" style="left:1068px;top:262px;width:20px;height:20px;border-radius:50%;background:#fff;border:4px solid #1eab7a"></div><div class="a " style="left:1097px;top:263px;font-size:14px;line-height:17px;color:#6b7280;font-weight:normal;letter-spacing:-0.2px;white-space:nowrap;">Closed</div><div class="a" style="left:1155.5px;top:262.5px;width:19px;height:19px;border-radius:50%;background:#fff;border:1px solid #d7dbe1"></div><div class="a " style="left:1184px;top:263px;font-size:14px;line-height:17px;color:#6b7280;font-weight:normal;letter-spacing:-0.2px;white-space:nowrap;">Suspended</div><div class="a" style="left:466px;top:314px;width:1418px;height:1px;background:#e4e7ec"></div><div class="a " style="left:474px;top:336px;font-size:13px;line-height:15px;color:#2f3a48;font-weight:normal;letter-spacing:-0.1px;white-space:nowrap;-webkit-text-stroke:0.2px currentColor">Template</div><div class="a" style="left:470px;top:354px;width:299px;height:42px;background:#fff;border:1px solid #d3d7dd;border-radius:6px"></div><div class="a " style="left:483px;top:365px;font-size:16px;line-height:19px;color:#2a3441;font-weight:normal;letter-spacing:-0.3px;white-space:nowrap;">AR - Caretaking</div><svg class="a" style="left:740px;top:366px" width="18" height="18" viewBox="0 0 18 18" fill="none" stroke="#666" stroke-width="1.2" stroke-linecap="round" stroke-linejoin="round"><path d="M2.5 6l6.5 6.5 6.5-6.5"/></svg><div class="a " style="left:778px;top:336px;font-size:13px;line-height:15px;color:#2f3a48;font-weight:normal;letter-spacing:-0.1px;white-space:nowrap;-webkit-text-stroke:0.2px currentColor">Journal Description</div><div class="a" style="left:778px;top:354px;width:299px;height:42px;background:#fff;border:1px solid #d3d7dd;border-radius:6px"></div><div class="a " style="left:791px;top:365px;font-size:16px;line-height:19px;color:#2a3441;font-weight:normal;letter-spacing:0px;white-space:nowrap;">Condos again</div><div class="a " style="left:1086px;top:336px;font-size:13px;line-height:15px;color:#2f3a48;font-weight:normal;letter-spacing:-0.1px;white-space:nowrap;-webkit-text-stroke:0.2px currentColor">Transaction Date</div><div class="a" style="left:1086px;top:354px;width:248px;height:42px;background:#fff;border:1px solid #d3d7dd;border-radius:6px"></div><div class="a" style="left:1294px;top:355px;width:39px;height:40px;background:#f4f5f7;border-left:1px solid #d3d7dd;border-radius:0 5px 5px 0"></div><div class="a " style="left:1098px;top:365px;font-size:17px;line-height:19px;color:#2a3441;font-weight:normal;letter-spacing:0px;white-space:nowrap;">2025/09/11</div><svg class="a" style="left:1305px;top:366px" width="18" height="18" viewBox="0 0 18 18" fill="none" stroke="#444" stroke-width="1.3" stroke-linecap="round" stroke-linejoin="round"><rect x="3" y="4.5" width="12" height="11" rx="1.8"/><path d="M3 8.3h12M6.3 2.5v3M11.7 2.5v3"/></svg><div class="a " style="left:470px;top:410px;font-size:13px;line-height:15px;color:#2f3a48;font-weight:normal;letter-spacing:-0.1px;white-space:nowrap;-webkit-text-stroke:0.2px currentColor">Party</div><div class="a" style="left:470px;top:427px;width:299px;height:42px;background:#fff;border:1px solid #d3d7dd;border-radius:6px"></div><div class="a " style="left:483px;top:438px;font-size:16px;line-height:19px;color:#6b7280;font-weight:normal;letter-spacing:0px;white-space:nowrap;">Party</div><svg class="a" style="left:740px;top:439px" width="18" height="18" viewBox="0 0 18 18" fill="none" stroke="#666" stroke-width="1.2" stroke-linecap="round" stroke-linejoin="round"><path d="M2.5 6l6.5 6.5 6.5-6.5"/></svg><div class="a " style="left:778px;top:410px;font-size:13px;line-height:15px;color:#2f3a48;font-weight:normal;letter-spacing:-0.1px;white-space:nowrap;-webkit-text-stroke:0.2px currentColor">Reference</div><div class="a" style="left:778px;top:427px;width:299px;height:42px;background:#fff;border:1px solid #d3d7dd;border-radius:6px"></div><div class="a " style="left:791px;top:438px;font-size:16px;line-height:19px;color:#2a3441;font-weight:normal;letter-spacing:0px;white-space:nowrap;">Refer</div><div class="a " style="left:1090px;top:410px;font-size:13px;line-height:15px;color:#2f3a48;font-weight:normal;letter-spacing:-0.1px;white-space:nowrap;-webkit-text-stroke:0.2px currentColor">Due Date</div><div class="a" style="left:1086px;top:427px;width:248px;height:42px;background:#fff;border:1px solid #d3d7dd;border-radius:6px"></div><div class="a" style="left:1294px;top:428px;width:39px;height:40px;background:#f4f5f7;border-left:1px solid #d3d7dd;border-radius:0 5px 5px 0"></div><div class="a " style="left:1098px;top:438px;font-size:17px;line-height:19px;color:#2a3441;font-weight:normal;letter-spacing:0px;white-space:nowrap;">2025/10/05</div><svg class="a" style="left:1305px;top:439px" width="18" height="18" viewBox="0 0 18 18" fill="none" stroke="#444" stroke-width="1.3" stroke-linecap="round" stroke-linejoin="round"><rect x="3" y="4.5" width="12" height="11" rx="1.8"/><path d="M3 8.3h12M6.3 2.5v3M11.7 2.5v3"/></svg><div class="a " style="left:1398px;top:410px;font-size:13px;line-height:15px;color:#2f3a48;font-weight:normal;letter-spacing:-0.1px;white-space:nowrap;-webkit-text-stroke:0.2px currentColor">Transaction Amount</div><div class="a" style="left:1394px;top:427px;width:237px;height:42px;background:#fff;border:1px solid #d3d7dd;border-radius:6px"></div><div class="a " style="left:1407px;top:438px;font-size:17px;line-height:20px;color:#8b93a0;font-weight:normal;letter-spacing:0px;white-space:nowrap;">$</div><div class="a" style="right:294px;top:438px;font-size:16px;line-height:19px;color:#2a3441;font-weight:normal;letter-spacing:0.2px;white-space:nowrap;text-align:right;">3,000.00</div><div class="a" style="left:459px;top:480px;width:1431px;height:1px;background:#334155"></div><div class="a" style="left:1166px;top:474px;width:18px;height:12px;background:#f0f4f8"></div><div class="a" style="left:1168px;top:477px;width:14px;height:1.5px;background:#5a606b"></div><div class="a" style="left:1168px;top:481.5px;width:14px;height:1.5px;background:#5a606b"></div><div class="a" style="left:1874px;top:202px;width:38px;height:40px;background:#dd3434;border-radius:6px 0 0 6px;box-shadow:0 1px 3px rgba(0,0,0,.15)"></div><div class="a" style="left:1884px;top:202px;width:8px;height:40px;background:rgba(60,0,20,0.13)"></div><svg class="a" style="left:1884px;top:212px" width="20" height="20" viewBox="0 0 24 24"><path fill="#fff" d="M19.14 12.94c.04-.3.06-.61.06-.94 0-.32-.02-.64-.07-.94l2.03-1.58a.49.49 0 0 0 .12-.61l-1.92-3.32a.488.488 0 0 0-.59-.22l-2.39.96c-.5-.38-1.03-.7-1.62-.94l-.36-2.54a.484.484 0 0 0-.48-.41h-3.84c-.24 0-.43.17-.47.41l-.36 2.54c-.59.24-1.13.57-1.62.94l-2.39-.96c-.22-.08-.47 0-.59.22L2.74 8.87c-.12.21-.08.47.12.61l2.03 1.58c-.05.3-.09.63-.09.94s.02.64.07.94l-2.03 1.58a.49.49 0 0 0-.12.61l1.92 3.32c.12.22.37.29.59.22l2.39-.96c.5.38 1.03.7 1.62.94l.36 2.54c.05.24.24.41.48.41h3.84c.24 0 .44-.17.47-.41l.36-2.54c.59-.24 1.13-.56 1.62-.94l2.39.96c.22.08.47 0 .59-.22l1.92-3.32c.12-.22.07-.47-.12-.61l-2.01-1.58zM12 15.6c-1.98 0-3.6-1.62-3.6-3.6s1.62-3.6 3.6-3.6 3.6 1.62 3.6 3.6-1.62 3.6-3.6 3.6z"/></svg><div class="a md" style="left:506px;top:497px;font-size:14px;line-height:16px;color:#161d29;font-weight:normal;letter-spacing:0.05px;white-space:nowrap;">Debits and Credit</div><div class="a md" style="left:663px;top:497px;font-size:14px;line-height:16px;color:#161d29;font-weight:normal;letter-spacing:-0.15px;white-space:nowrap;">Evidence</div><div class="a md" style="left:768px;top:497px;font-size:14px;line-height:16px;color:#161d29;font-weight:normal;letter-spacing:-0.1px;white-space:nowrap;">Analysis</div><div class="a md" style="left:870px;top:497px;font-size:14px;line-height:16px;color:#161d29;font-weight:normal;letter-spacing:0.1px;white-space:nowrap;">Audit Trail</div><div class="a" style="left:482px;top:528px;width:1385px;height:1px;background:#dde1e6"></div><div class="a" style="left:482px;top:526px;width:157px;height:3px;background:#135fb5"></div><div class="a" style="left:482px;top:554px;width:1385px;height:56px;background:#e2e8f0;border-radius:6px"></div><svg class="a" style="left:490px;top:565px" width="230" height="35" viewBox="490 565 230 35" fill="none" stroke="#21ad7b" stroke-width="1.65" stroke-linecap="round" stroke-linejoin="round"><g transform="translate(510 582) scale(0.88) translate(-510 -582)"><path d="M507.5 576h-1.8a1.8 1.8 0 0 0-1.8 1.8v10.4a1.8 1.8 0 0 0 1.8 1.8h6.6a1.8 1.8 0 0 0 1.8-1.8v-.8"/><path d="M507.6 575.6a1.8 1.8 0 0 1 1.8-1.8h3.6l3.4 3.4v8a1.8 1.8 0 0 1-1.8 1.8h-5.2a1.8 1.8 0 0 1-1.8-1.8z"/></g><g transform="translate(557.5 582) scale(0.88) translate(-557.5 -582)"><path d="M555.5 589.8h-3.5a1.8 1.8 0 0 1-1.8-1.8v-12.4a1.8 1.8 0 0 1 1.8-1.8h5.5l5 5v1.4"/><path d="M557.2 573.8v4.4h4.6"/><path d="M557.3 590.5l6.8-6.8a1.3 1.3 0 0 1 1.8 1.8l-6.8 6.8h-1.8z"/></g><g transform="translate(606 582) scale(0.88) translate(-606 -582)"><path d="M598.3 577.5h15.2M600 577.5l.9 10.6a1.8 1.8 0 0 0 1.8 1.7h6.2a1.8 1.8 0 0 0 1.8-1.7l.9-10.6M602.5 577.5v-2a1.5 1.5 0 0 1 1.5-1.5h3.8a1.5 1.5 0 0 1 1.5 1.5v2M604.3 581v5M607.4 581v5"/></g><g transform="translate(654 582) scale(0.88) translate(-654 -582)"><path d="M646.5 582.3h15M654 574.8v15"/></g><g transform="translate(702 582) scale(0.88) translate(-702 -582)"><path d="M697 574h8.5l3.3 3.3v10.8a1.8 1.8 0 0 1-1.8 1.8h-10a1.8 1.8 0 0 1-1.8-1.8v-12.3a1.8 1.8 0 0 1 1.8-1.8z"/><path d="M698.2 574v4h7.2v-4"/><rect x="698.5" y="583" width="7.2" height="6.8"/></g></svg><div class="a" style="left:482px;top:618px;width:1385px;height:223px;background:#f8fafc;border-radius:6px;box-shadow:0 1px 3px rgba(0,0,0,.12)"></div><div class="a" style="left:491px;top:627px;width:1367px;height:34px;background:#fff"></div><div class="a" style="left:491px;top:661px;width:1367px;height:34px;background:#f9fafb"></div><div class="a" style="left:491px;top:695px;width:1367px;height:34px;background:#f9fafb"></div><div class="a" style="left:491px;top:729px;width:1367px;height:34px;background:#f9fafb"></div><div class="a" style="left:491px;top:763px;width:1251px;height:70px;background:#fff"></div><div class="a" style="left:491px;top:627px;width:1367px;height:1px;background:#e4e7eb"></div><div class="a" style="left:491px;top:661px;width:1367px;height:1px;background:#e4e7eb"></div><div class="a" style="left:491px;top:695px;width:1367px;height:1px;background:#e4e7eb"></div><div class="a" style="left:491px;top:729px;width:1367px;height:1px;background:#e4e7eb"></div><div class="a" style="left:491px;top:763px;width:1251px;height:1px;background:#e4e7eb"></div><div class="a" style="left:491px;top:797px;width:1251px;height:1px;background:#e4e7eb"></div><div class="a" style="left:491px;top:832px;width:1251px;height:1px;background:#e4e7eb"></div><div class="a" style="left:491px;top:627px;width:1px;height:136px;background:#e4e7eb"></div><div class="a" style="left:545px;top:627px;width:1px;height:136px;background:#e4e7eb"></div><div class="a" style="left:677px;top:627px;width:1px;height:136px;background:#e4e7eb"></div><div class="a" style="left:943px;top:627px;width:1px;height:136px;background:#e4e7eb"></div><div class="a" style="left:1116px;top:627px;width:1px;height:136px;background:#e4e7eb"></div><div class="a" style="left:1266px;top:627px;width:1px;height:136px;background:#e4e7eb"></div><div class="a" style="left:1375px;top:627px;width:1px;height:136px;background:#e4e7eb"></div><div class="a" style="left:1472px;top:627px;width:1px;height:136px;background:#e4e7eb"></div><div class="a" style="left:1625px;top:627px;width:1px;height:136px;background:#e4e7eb"></div><div class="a" style="left:1742px;top:627px;width:1px;height:136px;background:#e4e7eb"></div><div class="a" style="left:1858px;top:627px;width:1px;height:136px;background:#e4e7eb"></div><div class="a" style="left:491px;top:763px;width:1px;height:70px;background:#e4e7eb"></div><div class="a" style="left:1472px;top:763px;width:1px;height:70px;background:#e4e7eb"></div><div class="a" style="left:1742px;top:763px;width:1px;height:70px;background:#e4e7eb"></div><div class="a" style="left:1625px;top:763px;width:1px;height:34px;background:#e4e7eb"></div><div class="a " style="left:500px;top:634px;font-size:15px;line-height:17px;color:#1f2d3d;font-weight:bold;letter-spacing:-0.4px;white-space:nowrap;transform:scaleX(0.88);transform-origin:0 0">ID</div><div class="a " style="left:553px;top:634px;font-size:15px;line-height:17px;color:#1f2d3d;font-weight:bold;letter-spacing:-0.4px;white-space:nowrap;transform:scaleX(0.88);transform-origin:0 0">ACCOUNT</div><div class="a " style="left:686px;top:634px;font-size:15px;line-height:17px;color:#1f2d3d;font-weight:bold;letter-spacing:-0.4px;white-space:nowrap;transform:scaleX(0.88);transform-origin:0 0">ACCOUNT DESC</div><div class="a " style="left:952px;top:634px;font-size:15px;line-height:17px;color:#1f2d3d;font-weight:bold;letter-spacing:-0.4px;white-space:nowrap;transform:scaleX(0.88);transform-origin:0 0">DESCRIPTION</div><div class="a " style="left:1124px;top:634px;font-size:15px;line-height:17px;color:#1f2d3d;font-weight:bold;letter-spacing:-0.4px;white-space:nowrap;transform:scaleX(0.88);transform-origin:0 0">META DATA</div><div class="a " style="left:1275px;top:634px;font-size:15px;line-height:17px;color:#1f2d3d;font-weight:bold;letter-spacing:-0.4px;white-space:nowrap;transform:scaleX(0.88);transform-origin:0 0">FUND</div><div class="a " style="left:1383px;top:634px;font-size:15px;line-height:17px;color:#1f2d3d;font-weight:bold;letter-spacing:-0.4px;white-space:nowrap;transform:scaleX(0.88);transform-origin:0 0">TYPE</div><div class="a " style="left:1481px;top:634px;font-size:15px;line-height:17px;color:#1f2d3d;font-weight:bold;letter-spacing:-0.4px;white-space:nowrap;transform:scaleX(0.88);transform-origin:0 0">REFERENCE</div><div class="a" style="right:178px;top:634px;font-size:15px;line-height:17px;color:#1f2d3d;font-weight:bold;letter-spacing:-0.4px;white-space:nowrap;text-align:right;transform:scaleX(0.88);transform-origin:100% 0">DEBIT</div><div class="a" style="right:62px;top:634px;font-size:15px;line-height:17px;color:#1f2d3d;font-weight:bold;letter-spacing:-0.4px;white-space:nowrap;text-align:right;transform:scaleX(0.88);transform-origin:100% 0">CREDIT</div><div class="a " style="left:500px;top:670px;font-size:14px;line-height:17px;color:#374151;font-weight:normal;letter-spacing:0px;white-space:nowrap;">42</div><div class="a " style="left:553px;top:670px;font-size:14px;line-height:17px;color:#374151;font-weight:normal;letter-spacing:0px;white-space:nowrap;">1001</div><div class="a " style="left:686px;top:670px;font-size:14px;line-height:17px;color:#374151;font-weight:normal;letter-spacing:0px;white-space:nowrap;">Bank Account - Savings</div><div class="a " style="left:952px;top:670px;font-size:14px;line-height:17px;color:#374151;font-weight:normal;letter-spacing:0px;white-space:nowrap;">Description</div><div class="a " style="left:1275px;top:670px;font-size:14px;line-height:17px;color:#374151;font-weight:normal;letter-spacing:0px;white-space:nowrap;">Capital</div><div class="a " style="left:1383px;top:670px;font-size:14px;line-height:17px;color:#374151;font-weight:normal;letter-spacing:0px;white-space:nowrap;">Assets</div><div class="a " style="left:1481px;top:670px;font-size:14px;line-height:17px;color:#374151;font-weight:normal;letter-spacing:0px;white-space:nowrap;">Reference</div><div class="a" style="right:178px;top:670px;font-size:14px;line-height:17px;color:#374151;font-weight:normal;letter-spacing:0px;white-space:nowrap;text-align:right;">0.00</div><div class="a" style="right:62px;top:670px;font-size:14px;line-height:17px;color:#374151;font-weight:normal;letter-spacing:0px;white-space:nowrap;text-align:right;">3,000.00</div><div class="a " style="left:500px;top:704px;font-size:14px;line-height:17px;color:#374151;font-weight:normal;letter-spacing:0px;white-space:nowrap;">42</div><div class="a " style="left:553px;top:704px;font-size:14px;line-height:17px;color:#374151;font-weight:normal;letter-spacing:0px;white-space:nowrap;">6020</div><div class="a " style="left:686px;top:704px;font-size:14px;line-height:17px;color:#374151;font-weight:normal;letter-spacing:0px;white-space:nowrap;">Interest expense</div><div class="a " style="left:952px;top:704px;font-size:14px;line-height:17px;color:#374151;font-weight:normal;letter-spacing:0px;white-space:nowrap;">Landscaping</div><div class="a " style="left:1275px;top:704px;font-size:14px;line-height:17px;color:#374151;font-weight:normal;letter-spacing:0px;white-space:nowrap;">Reserve</div><div class="a " style="left:1481px;top:704px;font-size:14px;line-height:17px;color:#374151;font-weight:normal;letter-spacing:0px;white-space:nowrap;">Ref 1</div><div class="a" style="right:178px;top:704px;font-size:14px;line-height:17px;color:#374151;font-weight:normal;letter-spacing:0px;white-space:nowrap;text-align:right;">1,500.00</div><div class="a" style="right:62px;top:704px;font-size:14px;line-height:17px;color:#374151;font-weight:normal;letter-spacing:0px;white-space:nowrap;text-align:right;">0.00</div><div class="a " style="left:500px;top:738px;font-size:14px;line-height:17px;color:#374151;font-weight:normal;letter-spacing:0px;white-space:nowrap;">42</div><div class="a " style="left:553px;top:738px;font-size:14px;line-height:17px;color:#374151;font-weight:normal;letter-spacing:0px;white-space:nowrap;">6050</div><div class="a " style="left:686px;top:738px;font-size:14px;line-height:17px;color:#374151;font-weight:normal;letter-spacing:0px;white-space:nowrap;">Snow removal</div><div class="a " style="left:952px;top:738px;font-size:14px;line-height:17px;color:#374151;font-weight:normal;letter-spacing:0px;white-space:nowrap;">Landscaping</div><div class="a " style="left:1275px;top:738px;font-size:14px;line-height:17px;color:#374151;font-weight:normal;letter-spacing:0px;white-space:nowrap;">Reserve</div><div class="a " style="left:1383px;top:738px;font-size:14px;line-height:17px;color:#374151;font-weight:normal;letter-spacing:0px;white-space:nowrap;">Assets</div><div class="a " style="left:1481px;top:738px;font-size:14px;line-height:17px;color:#374151;font-weight:normal;letter-spacing:0px;white-space:nowrap;">2001</div><div class="a" style="right:178px;top:738px;font-size:14px;line-height:17px;color:#374151;font-weight:normal;letter-spacing:0px;white-space:nowrap;text-align:right;">1,500.00</div><div class="a" style="right:62px;top:738px;font-size:14px;line-height:17px;color:#374151;font-weight:normal;letter-spacing:0px;white-space:nowrap;text-align:right;">0.00</div><div class="a" style="right:448px;top:771px;font-size:15px;line-height:17px;color:#1f2d3d;font-weight:bold;letter-spacing:-0.2px;white-space:nowrap;text-align:right;transform:scaleX(0.9);transform-origin:100% 0">Totals:</div><div class="a" style="right:296px;top:771px;font-size:15px;line-height:17px;color:#1f2d3d;font-weight:bold;letter-spacing:-0.2px;white-space:nowrap;text-align:right;transform:scaleX(0.9);transform-origin:100% 0">3,000.00</div><div class="a" style="right:178px;top:771px;font-size:15px;line-height:17px;color:#1f2d3d;font-weight:bold;letter-spacing:-0.2px;white-space:nowrap;text-align:right;transform:scaleX(0.9);transform-origin:100% 0">3,000.00</div><div class="a" style="right:448px;top:806px;font-size:15px;line-height:17px;color:#1f2d3d;font-weight:bold;letter-spacing:-0.2px;white-space:nowrap;text-align:right;transform:scaleX(0.9);transform-origin:100% 0">Difference:</div><div class="a" style="right:178px;top:806px;font-size:15px;line-height:17px;color:#1f2d3d;font-weight:bold;letter-spacing:-0.2px;white-space:nowrap;text-align:right;transform:scaleX(0.9);transform-origin:100% 0">0.00</div><div class="a" style="left:452px;top:550px;width:2px;height:13px;background:#7a7890"></div><div class="a" style="left:457px;top:550px;width:1.5px;height:13px;background:#8c8f96"></div></body></html>
